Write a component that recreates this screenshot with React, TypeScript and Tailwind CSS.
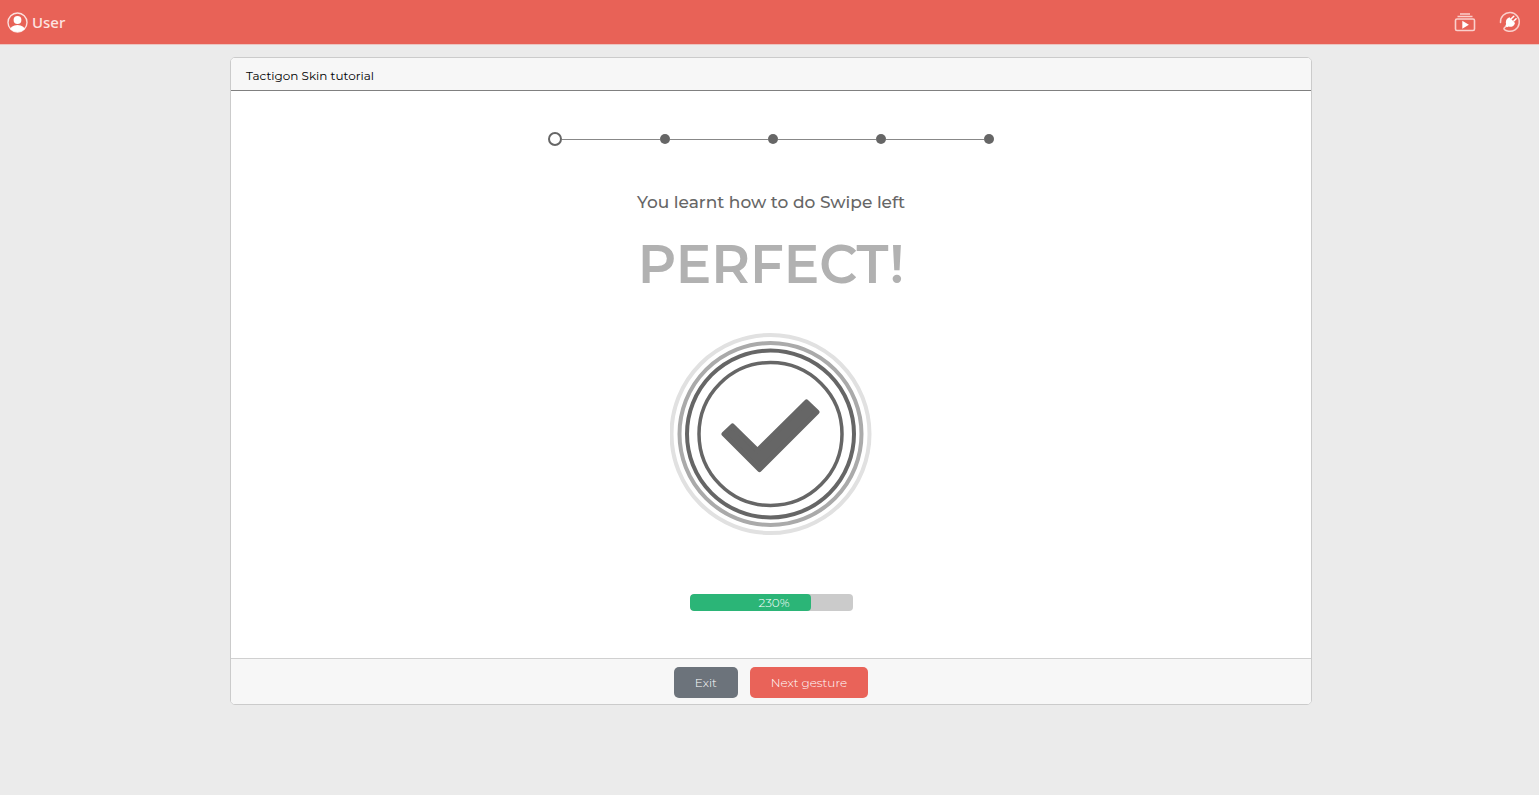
const STEPS = [1, 2, 3, 4];

function UserIcon() {
  return (
    <svg width="21" height="21" viewBox="0 0 21 21" aria-hidden="true">
      <defs>
        <clipPath id="avatar">
          <circle cx="10.5" cy="10.5" r="9.6" />
        </clipPath>
      </defs>
      <circle cx="10.5" cy="10.5" r="9.5" fill="none" stroke="#fbe0de" strokeWidth="1.4" />
      <circle cx="10.5" cy="8" r="3.9" fill="#fff" />
      <ellipse cx="10.5" cy="19" rx="8" ry="6" fill="#fff" clipPath="url(#avatar)" />
    </svg>
  );
}

function VideosIcon() {
  return (
    <svg width="22" height="20" viewBox="0 0 22 20" fill="none" stroke="#fad0cc" aria-hidden="true">
      <path d="M6 2h10M3.500 4.500h15" strokeWidth="1.400" />
      <rect x="1.500" y="7" width="19" height="11.500" rx="1.500" strokeWidth="1.600" />
      <path d="M8.300 8.800v8l6.600-4z" fill="#fff" stroke="none" />
    </svg>
  );
}

function PlugIcon() {
  return (
    <svg width="22" height="22" viewBox="0 0 22 22" fill="none" stroke="#fad0cc" strokeLinecap="round" aria-hidden="true">
      <path d="M1.500 11.500A9.400 9.400 0 1 1 8.500 20C6.500 19.500 4.500 18.500 5 17.300C5.500 16.300 6.500 15.800 7.500 15" strokeWidth="1.500" />
      <path d="M12.500 7.500l2.300-2.300M14.800 10l2.300-2.300" stroke="#fff" strokeWidth="1.500" />
      <path d="M10.500 6.200l5.500 5.700-.6 1.500c-1 2-3.400 2.800-5.700 2l-1.700.9-1.600-1.600.7-1.800c-.8-2.300.2-4.800 2-5.900z" fill="#fff" stroke="none" />
    </svg>
  );
}

function SuccessIcon() {
  return (
    <svg width="202" height="202" viewBox="0 0 202 202" fill="none" role="img" aria-label="Success">
      <circle cx="100.500" cy="101" r="99" stroke="#e1e1e1" strokeWidth="4" />
      <circle cx="100.500" cy="101" r="91" stroke="#aaaaaa" strokeWidth="4" />
      <circle cx="100.500" cy="101" r="83.500" stroke="#666666" strokeWidth="4" />
      <circle cx="100.500" cy="101" r="71.500" stroke="#666666" strokeWidth="3.500" />
      <path
        d="M54 101L62.500 93L87.500 117.500L136.500 69L147 79L89.500 136.500Z"
        fill="#666666"
        stroke="#666666"
        strokeWidth="5"
        strokeLinejoin="round"
      />
    </svg>
  );
}

export default function App() {
  return (
    <div className="min-h-screen bg-[#ebebeb] font-['Montserrat','Inter',sans-serif] text-[#212529]">
      <header className="flex h-[45px] items-center justify-between border-b border-[#ecc4c0] bg-[#e86257] pr-[18px] pl-[7px]">
        <a href="#user" className="flex items-center gap-1 pt-px font-['Noto_Sans',sans-serif] text-[15px] font-medium text-[#fde4e1]">
          <UserIcon />
          User
        </a>
        <nav className="flex items-center gap-[23px]">
          <a href="#tutorials" aria-label="Tutorials">
            <VideosIcon />
          </a>
          <a href="#connection" aria-label="Connection">
            <PlugIcon />
          </a>
        </nav>
      </header>

      <main className="pt-3 pl-[3px]">
        <section className="mx-auto max-w-[1082px] rounded-[5px] border border-[#cbcbcb] bg-white">
          <div className="rounded-t-[4px] border-b border-[#808080] bg-[#f7f7f7] px-[15px] pt-2 pb-1">
            <h1 className="text-xs leading-5 text-black">Tactigon Skin tutorial</h1>
          </div>

          <div className="flex flex-col items-center pt-[41px] pb-[47px]">
            <ol className="flex w-[446px] items-center" aria-label="Progress">
              <li className="size-[14px] shrink-0 rounded-full border-2 border-[#666666]" />
              {STEPS.map((step) => (
                <li key={step} className="flex flex-1 items-center">
                  <span className="h-px flex-1 bg-[#888888]" />
                  <span className="size-[10px] rounded-full bg-[#666666]" />
                </li>
              ))}
            </ol>
            <h2 className="mt-11 text-[17px] leading-6 font-medium text-[#666666]">
              You learnt how to do Swipe left
            </h2>
            <p className="mt-4 text-[53px] leading-[68px] font-semibold text-[#b1b1b1]">PERFECT!</p>
            <div className="mt-[35px]">
              <SuccessIcon />
            </div>
            <div className="relative mt-[59px] h-[17px] w-[163px] overflow-hidden rounded-[4px] bg-[#cbcbcb]">
              <div className="h-full w-[121px] rounded-[4px] bg-[#2bb577]" />
              <span className="absolute inset-0 pl-[6px] text-center text-xs leading-[18px] font-light text-white">
                230%
              </span>
            </div>
          </div>

          <div className="flex justify-center gap-3 rounded-b-[4px] border-t border-[#d0d0d0] bg-[#f7f7f7] pt-2 pb-[6px]">
            <button type="button" className="h-[31px] rounded-[5px] bg-[#6c737b] px-[21px] text-xs font-light text-white">
              Exit
            </button>
            <button type="button" className="h-[31px] rounded-[5px] bg-[#e96359] px-[21px] text-xs font-light text-white">
              Next gesture
            </button>
          </div>
        </section>
      </main>
    </div>
  );
}
